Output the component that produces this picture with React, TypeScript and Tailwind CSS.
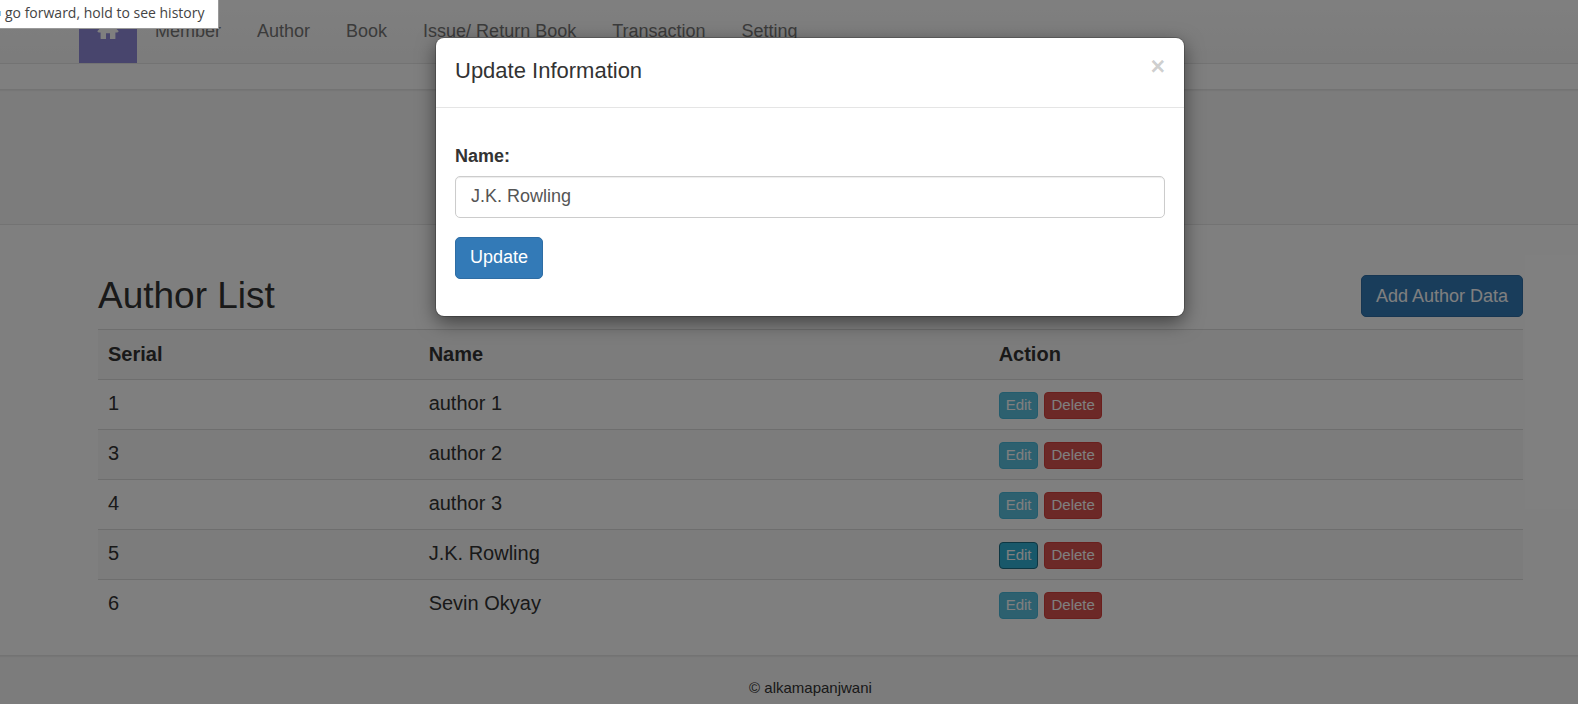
import { useState } from "react";

type Author = { id: number; name: string };

const authors: Author[] = [
  { id: 1, name: "author 1" },
  { id: 3, name: "author 2" },
  { id: 4, name: "author 3" },
  { id: 5, name: "J.K. Rowling" },
  { id: 6, name: "Sevin Okyay" },
];

const navItems = ["Member", "Author", "Book", "Issue/ Return Book", "Transaction", "Setting"];

function HomeIcon() {
  return (
    <svg viewBox="0 0 22 20" className="h-5 w-[22px]" fill="currentColor" aria-hidden="true">
      <path d="M11 .8 21.8 11.2 20.4 12.4H18.4V18.4q0 .6-.6.6H13V13.2H9V19H4.2q-.6 0-.6-.6V12.4H1.6L.2 11.2ZM16 2.2h2.6v4.6L16 4.2Z" />
    </svg>
  );
}

function NavBar() {
  return (
    <nav className="border-b border-[#e7e7e7] bg-linear-to-b from-white to-[#f8f8f8]">
      <div className="mx-auto flex max-w-[1463px]">
        <a
          href="#home"
          aria-label="Home"
          className="flex w-[58px] items-center justify-center bg-[#908bda] pb-1 text-white"
        >
          <HomeIcon />
        </a>
        {navItems.map((item) => (
          <a key={item} href="#" className="px-[18px] py-[19px] text-[18px] leading-[25px] text-[#777]">
            {item}
          </a>
        ))}
      </div>
    </nav>
  );
}

function AuthorRow({ author, active }: { author: Author; active: boolean }) {
  return (
    <tr className="h-[50px] border-t border-[#ddd] even:bg-[#f9f9f9]">
      <td className="px-[10px] pb-[3px]">{author.id}</td>
      <td className="px-[10px] pb-[3px]">{author.name}</td>
      <td className="px-[10px]">
        <div className="flex gap-[6px] pt-[1px] text-[15px] leading-[23px] text-white">
          <button
            type="button"
            className={
              active
                ? "rounded-[4px] border border-[#1b6d85] bg-[#31b0d5] px-[6px] pb-[2px]"
                : "rounded-[4px] border border-[#46b8da] bg-[#5bc0de] px-[6px] pb-[2px]"
            }
          >
            Edit
          </button>
          <button type="button" className="rounded-[4px] border border-[#d43f3a] bg-[#d9534f] px-[6px] pb-[2px]">
            Delete
          </button>
        </div>
      </td>
    </tr>
  );
}

function UpdateDialog() {
  const [name, setName] = useState("J.K. Rowling");
  return (
    <div
      role="dialog"
      aria-labelledby="dialog-title"
      className="w-[748px] rounded-[8px] bg-white shadow-[0_6px_19px_rgba(0,0,0,0.5),0_0_0_1px_rgba(0,0,0,0.2)]"
    >
      <div className="flex items-start justify-between border-b border-[#e5e5e5] px-[19px] pt-[17px] pb-[20px]">
        <h4 id="dialog-title" className="text-[22px] leading-8">
          Update Information
        </h4>
        <button type="button" aria-label="Close" className="text-[25px] leading-[22px] font-bold text-black/20">
          ×
        </button>
      </div>
      <form className="px-[19px] pt-9 pb-[37px]" onSubmit={(e) => e.preventDefault()}>
        <label htmlFor="author-name" className="block text-[18px] leading-[25px] font-bold">
          Name:
        </label>
        <input
          id="author-name"
          value={name}
          onChange={(e) => setName(e.target.value)}
          className="mt-[7px] block h-[42px] w-full rounded-[5px] border border-[#ccc] px-[15px] pb-[2px] text-[18px] text-[#555] shadow-[inset_0_1px_1px_rgba(0,0,0,0.075)] outline-none"
        />
        <button
          type="submit"
          className="mt-[19px] block h-[42px] rounded-[5px] border border-[#2e6da4] bg-[#337ab7] px-[14px] pb-[2px] text-[18px] text-white"
        >
          Update
        </button>
      </form>
    </div>
  );
}

export default function App() {
  return (
    <div className="relative min-h-screen overflow-hidden bg-white font-['Liberation_Sans',Arial,sans-serif] text-[#333]">
      <div className="flex min-h-screen w-[calc(100%+43px)] flex-col">
        <NavBar />
        <div className="h-[25px]" />
        <header className="h-[136px] border-y border-[#e7e7e7] bg-[#f8f8f8] shadow-[inset_0_2px_1px_-1px_rgba(0,0,0,0.05)]" />
        <main className="mx-auto w-full max-w-[1463px] px-[19px] pt-[50px] pb-[25px]">
          <div className="flex items-start justify-between pb-3">
            <h2 className="text-[37px] leading-[42px]">Author List</h2>
            <button
              type="button"
              className="h-[42px] rounded-[5px] border border-[#2e6da4] bg-[#337ab7] px-[14px] text-[18px] text-white"
            >
              Add Author Data
            </button>
          </div>
          <table className="w-full table-fixed border-collapse text-left text-[20px] leading-7">
            <thead>
              <tr className="h-[50px] border-t border-[#ddd] bg-[#f9f9f9]">
                <th className="w-[22.5%] px-[10px] pb-[2px] font-bold">Serial</th>
                <th className="w-[40%] px-[10px] pb-[2px] font-bold">Name</th>
                <th className="px-[10px] pb-[2px] font-bold">Action</th>
              </tr>
            </thead>
            <tbody>
              {authors.map((author) => (
                <AuthorRow key={author.id} author={author} active={author.id === 5} />
              ))}
            </tbody>
          </table>
        </main>
        <footer className="grow border-t border-[#e7e7e7] bg-[#f8f8f8] pt-[21px] text-center text-[15px] leading-[22px] shadow-[inset_0_2px_1px_-1px_rgba(0,0,0,0.05)]">
          © alkamapanjwani
        </footer>
      </div>

      <div className="absolute inset-0 bg-black/50">
        <div className="flex w-[calc(100%+42px)] justify-center pt-[38px]">
          <UpdateDialog />
        </div>
      </div>

      <div
        role="tooltip"
        className="absolute top-0 left-0 flex h-[29px] w-[219px] items-start gap-1 border-r border-b border-[#999] bg-white font-['Open_Sans','Noto_Sans',sans-serif] text-[14px] leading-[26px] whitespace-nowrap text-[#444]"
      >
        <span className="mt-[11px] h-[5px] w-px bg-[#8fc8ee]" />
        go forward, hold to see history
      </div>
    </div>
  );
}
